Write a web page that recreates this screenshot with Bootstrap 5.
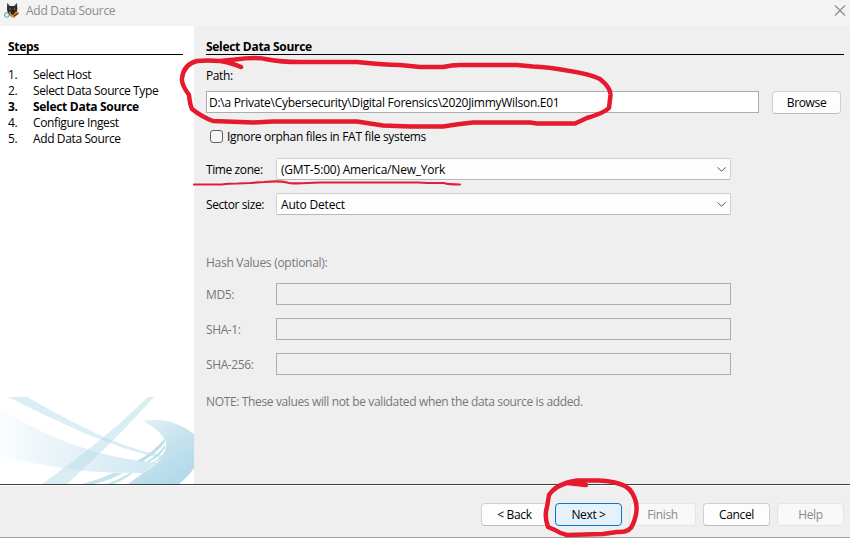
<!DOCTYPE html>
<html lang="en">
<head>
<meta charset="utf-8">
<title>Add Data Source</title>
<link href="https://cdn.jsdelivr.net/npm/bootstrap@5.3.0/dist/css/bootstrap.min.css" rel="stylesheet">
<style>
body{width:850px;height:538px;overflow:hidden;background:#efefef;color:#000;font:12px/16px "Open Sans","Noto Sans",sans-serif;letter-spacing:-.2px}
.window{height:538px;border-bottom:1px solid #a0a0a0}
.titlebar{height:26px;background:#f3f3f3;color:#8c8c8c;padding:0 4px 4px}
.title-text{margin-left:6px;letter-spacing:-.27px}
main{height:458px}
.steps{width:194px;background:#fff}
.steps-inner{padding:13px 11px 0 8px}
.section-title{font-size:12px;font-weight:700;line-height:15px;height:16px;border-bottom:1px solid #000;margin:0;letter-spacing:-.3px}
.step-list{margin:12px 0 0;padding:0;list-style:none;letter-spacing:-.38px}
.step-list .fw-bold{letter-spacing:-.3px}
.step-list span{width:25px}
.pane{padding:13px 6px 0 12px}
.path-label{margin-top:13px;margin-bottom:7px;letter-spacing:-.4px}
.line-edit{height:22px;border:1px solid #abadb3;border-radius:0;background:#fff;padding:0 2px;line-height:21px;font-size:12px;letter-spacing:-.28px}
.combo{width:455px;height:22px;border:1px solid #d0d0d0;border-bottom-color:#b8b8b8;border-radius:2px;background:#fdfdfd;padding:0 4px}
.combo span,.field-label{padding-top:1px}
.field-label{width:70px;letter-spacing:-.4px}
.row-gap{margin-bottom:13px}
.check-row{height:16px;margin:15px 0 13px;letter-spacing:-.31px}
.hash-title{padding-top:40px;margin-bottom:12px;letter-spacing:-.28px}
.hash{width:455px;background:#efefef}
.note{margin-top:19px;letter-spacing:-.36px}
.muted{color:#777}
.push{height:23px;border:1px solid #d0d0d0;border-bottom-color:#bbb;border-radius:4px;background:#fdfdfd;color:#000;font-size:12px;line-height:16px;padding:0;width:67px;letter-spacing:-.35px}
.push:disabled{background:#f8f8f8;border-color:#e4e4e4;color:#8a8a8a;opacity:1}
.push-default{background:#e5f1fb;border-color:#0078d4}
.browse{width:69px;margin:0 3px 0 13px}
.tick{width:13px;height:13px;border:1px solid #626262;border-radius:3px;background:#f5f5f5;margin:0 4px 2px}
.footer-bar{height:53px;border-top:1px solid #404040;box-shadow:inset 0 1px #fff;padding:18px 6px 0 0;gap:7px}
.ink{pointer-events:none}
</style>
<script src="https://cdn.jsdelivr.net/npm/bootstrap@5.3.0/dist/js/bootstrap.bundle.min.js"></script>
</head>
<body>
<div class="window d-flex flex-column position-relative">
  <header class="titlebar d-flex align-items-center">
    <svg width="16" height="18" viewBox="0 0 16 18">
      <path d="M3.200 1l2.800 3h4L13 1l.4 6-1 4-4 4-4.500-3L3 7z" fill="#292b31"/>
      <path d="M4 2l1 2.500M12.300 2l-1 2.500" stroke="#8a5d55" stroke-width=".8"/>
      <path d="M5 10l3-1 3 1 4-.5-2 3.500-3 3-4-2z" fill="#d97a28"/>
      <path d="M7 9.500h3.500l-.8 2.500H7.800zM10 14l4.500-2.500" stroke="#222" fill="#222"/>
      <path d="M5.500 7h1.300M9.800 7h1.300" stroke="#e08a35"/>
      <circle cx="2.800" cy="13" r="2.300" fill="#d8f4fb" stroke="#559dae"/>
    </svg>
    <span class="title-text">Add Data Source</span>
    <svg class="ms-auto" width="12" height="12" viewBox="0 0 12 12"><path d="M1 .5l10 10M11 .5l-10 10" stroke="#8a8a8a" stroke-width="1.100"/></svg>
  </header>
  <main class="d-flex">
    <aside class="steps d-flex flex-column justify-content-between">
      <div class="steps-inner">
        <h1 class="section-title">Steps</h1>
        <ol class="step-list">
          <li class="d-flex"><span>1.</span>Select Host</li>
          <li class="d-flex"><span>2.</span>Select Data Source Type</li>
          <li class="d-flex fw-bold"><span>3.</span>Select Data Source</li>
          <li class="d-flex"><span>4.</span>Configure Ingest</li>
          <li class="d-flex"><span>5.</span>Add Data Source</li>
        </ol>
      </div>
      <svg class="d-block" width="194" height="87" viewBox="0 0 194 87">
        <defs>
          <linearGradient id="fade"><stop stop-color="#fafdfe"/><stop offset=".4" stop-color="#e7f3f8"/><stop offset="1" stop-color="#cfe8f1"/></linearGradient>
          <linearGradient id="swirl" x1="0" y1="0" x2=".6" y2="1"><stop stop-color="#eaf5f9"/><stop offset=".55" stop-color="#c6e3ee"/><stop offset="1" stop-color="#b3daea"/></linearGradient>
        </defs>
        <path d="M0 11C45 40 95 60 157 66L143 76C95 77 50 71 0 59z" fill="url(#fade)"/>
        <path d="M8 0H27C70 24 120 52 163 58L160 61C115 52 60 26 8 0z" fill="#dceef5"/>
        <path d="M148 0H154C130 27 100 57 67 87H42C80 60 120 28 148 0z" fill="#b9deea" fill-opacity=".55"/>
        <path d="M142 24C160 21 175 23 194 37V71Q188 80 179 87H128L143 76Q152 71 157 66Q166 58 166 46Q162 33 142 24z" fill="url(#swirl)"/>
        <path d="M164 42Q155 54 137 64L142 65Q158 55 165 45zM165 48Q158 58 146 65H149Q160 59 165 51zM166 54Q160 62 152 66H154Q162 62 166 56z" fill="#bcdfeb"/>
        <path d="M82 87Q101 82 113 76H123Q111 83 94 87zM107 87Q120 82 130 76H133Q122 84 113 87z" fill="#c4e3ed"/>
      </svg>
    </aside>
    <section class="pane flex-grow-1">
      <h2 class="section-title">Select Data Source</h2>
      <div class="path-label">Path:</div>
      <div class="d-flex">
        <div class="line-edit flex-grow-1">D:\a Private\Cybersecurity\Digital Forensics\2020JimmyWilson.E01</div>
        <button class="btn push browse">Browse</button>
      </div>
      <label class="d-flex align-items-center check-row"><span class="tick"></span><span>Ignore orphan files in FAT file systems</span></label>
      <div class="d-flex align-items-center row-gap">
        <span class="field-label">Time zone:</span>
        <div class="combo d-flex align-items-center justify-content-between"><span>(GMT-5:00) America/New_York</span><svg width="9" height="6" viewBox="0 0 9 6"><path d="M.5 1.300l4 4 4-4" fill="none" stroke="#555"/></svg></div>
      </div>
      <div class="d-flex align-items-center">
        <span class="field-label">Sector size:</span>
        <div class="combo d-flex align-items-center justify-content-between"><span>Auto Detect</span><svg width="9" height="6" viewBox="0 0 9 6"><path d="M.5 1.300l4 4 4-4" fill="none" stroke="#555"/></svg></div>
      </div>
      <div class="muted">
        <div class="hash-title">Hash Values (optional):</div>
        <div class="d-flex align-items-center row-gap"><span class="field-label">MD5:</span><div class="line-edit hash"></div></div>
        <div class="d-flex align-items-center row-gap"><span class="field-label">SHA-1:</span><div class="line-edit hash"></div></div>
        <div class="d-flex align-items-center"><span class="field-label">SHA-256:</span><div class="line-edit hash"></div></div>
        <div class="note">NOTE: These values will not be validated when the data source is added.</div>
      </div>
    </section>
  </main>
  <footer class="footer-bar d-flex justify-content-end">
    <button class="btn push">&lt; Back</button>
    <button class="btn push push-default">Next &gt;</button>
    <button class="btn push" disabled>Finish</button>
    <button class="btn push">Cancel</button>
    <button class="btn push" disabled>Help</button>
  </footer>
  <svg class="ink position-absolute top-0 start-0" width="850" height="538" viewBox="0 0 850 538" fill="none" stroke="#e6192e" stroke-linecap="round" stroke-linejoin="round">
    <path stroke-width="4.500" d="M241 67Q232 63 220 61L235 59.500Q257 56.500 268 59.500Q280 62 300 62H357Q385 65 400 65L420 67H443Q452 65 460 65H517L533 66.500Q548 67 567 70.500Q590 74 600 79Q611 88 610.500 95L609 108Q604 113 587 118L575 123.500H537L530 122.500H473Q458 124 443 126.500H410L383 125.500L357 121.500H273L253 122.500L213 121Q202 117 192 109Q190 105 189 95Q181 84 182 78Q184 64 197 61Q207 60 220 61"/>
    <path stroke-width="2.200" stroke="#e02038" d="M194 184.500H222Q228 183.500 238 183.500L250 183L264 182Q280 180.500 287 182.500Q292 184 308 183L320 182.500H418L427 183L444 183Q448 184.500 460 184.500"/>
    <path stroke-width="4.500" d="M586 485L567 483Q555 486 549 495L547 507Q544 516 548 527L555 530Q561 534 567 535L603 534L617 532Q630 533 633 524Q639 510 635 499Q631 487 620 484Q608 480 594 480.500H577Q566 482 562 485"/>
  </svg>
</div>
</body>
</html>
